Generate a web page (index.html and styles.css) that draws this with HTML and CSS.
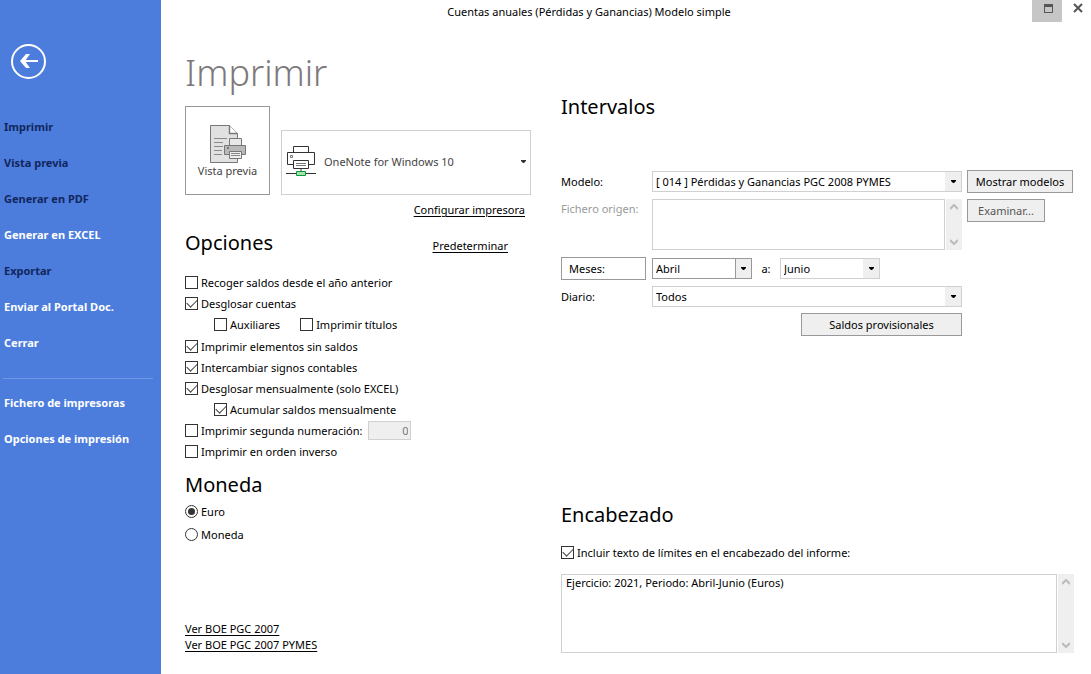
FILE: index.html
```html
<!DOCTYPE html>
<html lang="es">
<head>
<meta charset="utf-8">
<title>Cuentas anuales (Pérdidas y Ganancias) Modelo simple</title>
<link rel="stylesheet" href="styles.css">
</head>
<body>
<div class="app">
  <nav class="sidebar">
    <button class="back" aria-label="Volver">
      <svg width="35" height="35" viewBox="0 0 35 35" fill="none"><circle cx="17.500" cy="17.500" r="16.500" stroke="#fff" stroke-width="2"/><path d="M27 17H11" stroke="#fff" stroke-width="2"/><path d="M9 17l6-7h4l-5 7 5 7h-4z" fill="#fff"/></svg>
    </button>
    <ul class="menu">
      <li><button class="item dark">Imprimir</button></li>
      <li><button class="item dark">Vista previa</button></li>
      <li><button class="item dark">Generar en PDF</button></li>
      <li><button class="item">Generar en EXCEL</button></li>
      <li><button class="item dark">Exportar</button></li>
      <li><button class="item">Enviar al Portal Doc.</button></li>
      <li><button class="item">Cerrar</button></li>
    </ul>
    <hr class="divider">
    <ul class="menu">
      <li><button class="item">Fichero de impresoras</button></li>
      <li><button class="item">Opciones de impresión</button></li>
    </ul>
  </nav>

  <main class="main">
    <header class="titlebar">
      <span class="title">Cuentas anuales (Pérdidas y Ganancias) Modelo simple</span>
      <button class="win win-max" aria-label="Maximizar"><svg width="9" height="9" viewBox="0 0 9 9"><path d="M0 0h9v9H0zM1 3v5h7V3z" fill="#555" fill-rule="evenodd"/></svg></button>
      <button class="win win-close" aria-label="Cerrar"><svg width="10" height="10" viewBox="0 0 10 10"><path d="M1 1l8 8M9 1L1 9" stroke="#555" stroke-width="2"/></svg></button>
    </header>

    <div class="content">
      <section class="left">
        <h1 class="page-title">Imprimir</h1>
        <div class="printer-row">
          <button class="preview">
            <svg width="36" height="38" viewBox="0 0 36 38"><path d="M.5.5h19l8 8v29H.5z" fill="#e1e1e1" stroke="#777"/><path d="M19.500.5v8h8" fill="#fff" stroke="#777" stroke-width="1.400"/><path d="M4 13.500h13M4 17.500h9M4 21.500h9M4 25.500h8M4 29.500h8" stroke="#8a8a8a"/><path d="M19.500 13.500h12v7h-12z" fill="#e8e8e8" stroke="#777"/><path d="M14.500 20.500h21v9h-21z" fill="#b9b9b9" stroke="#777"/><path d="M17 22h2v2h-2z" fill="#777"/><path d="M19.500 26.500h12v7h-12z" fill="#eee" stroke="#777"/><path d="M21 28.500h9M21 30.500h9" stroke="#888"/></svg>
            <span>Vista previa</span>
          </button>
          <button class="printer">
            <svg width="30" height="31" viewBox="0 0 30 31" fill="#fff" stroke="#333"><path d="M7.500.5h15v6h-15zM1.500 6.500h27v12h-27z"/><path d="M4.500 9.500h2v2h-2z" stroke="#777"/><path d="M7.500 14.500h15v8h-15z"/><path d="M10 17.500h10M10 19.500h10" stroke="#777"/><path d="M15 23v3" stroke="#999" stroke-width="2"/><path d="M0 27.500h30"/><path d="M10.500 25.500h9v4h-9z" fill="#a8dfb4" stroke="#0a9a36"/></svg>
            <span class="printer-name">OneNote for Windows 10</span>
            <svg width="5" height="3" viewBox="0 0 5 3"><path d="M0 0h5v1L3 3H2L0 1z" fill="#333"/></svg>
          </button>
        </div>
        <div class="configure"><a class="link" href="#">Configurar impresora</a></div>
        <div class="options-head"><h2 class="heading">Opciones</h2><a class="link" href="#">Predeterminar</a></div>
        <div class="options">
          <label class="check"><input type="checkbox">Recoger saldos desde el año anterior</label>
          <label class="check"><input type="checkbox" checked>Desglosar cuentas</label>
          <div class="pair">
            <label class="check"><input type="checkbox">Auxiliares</label>
            <label class="check"><input type="checkbox">Imprimir títulos</label>
          </div>
          <label class="check"><input type="checkbox" checked>Imprimir elementos sin saldos</label>
          <label class="check"><input type="checkbox" checked>Intercambiar signos contables</label>
          <label class="check"><input type="checkbox" checked>Desglosar mensualmente (solo EXCEL)</label>
          <label class="check indent"><input type="checkbox" checked>Acumular saldos mensualmente</label>
          <div class="numbering">
            <label class="check"><input type="checkbox">Imprimir segunda numeración:</label>
            <input class="number" type="text" value="0" aria-label="Segunda numeración" disabled>
          </div>
          <label class="check"><input type="checkbox">Imprimir en orden inverso</label>
        </div>
        <h2 class="heading currency-head">Moneda</h2>
        <div class="currency">
          <label class="check"><input type="radio" name="moneda" checked>Euro</label>
          <label class="check"><input type="radio" name="moneda">Moneda</label>
        </div>
        <div class="boe">
          <a class="link" href="#">Ver BOE PGC 2007</a>
          <a class="link" href="#">Ver BOE PGC 2007 PYMES</a>
        </div>
      </section>

      <section class="right">
        <h2 class="heading">Intervalos</h2>
        <div class="form">
          <div class="row">
            <label for="modelo">Modelo:</label>
            <div class="combo"><select id="modelo"><option>[ 014 ] Pérdidas y Ganancias PGC 2008 PYMES</option></select><span class="arrow"><svg width="5" height="3" viewBox="0 0 5 3"><path d="M0 0h5v1L3 3H2L0 1z"/></svg></span></div>
            <button class="btn wide">Mostrar modelos</button>
          </div>
          <div class="row row-file">
            <label class="muted" for="fichero">Fichero origen:</label>
            <div class="scroll-box">
              <textarea id="fichero" class="area area-file"></textarea>
              <div class="scrollbar"><svg width="8" height="7" viewBox="0 0 8 7"><path d="M0 5l4-4 4 4" /></svg><svg width="8" height="7" viewBox="0 0 8 7"><path d="M0 2l4 4 4-4"/></svg></div>
            </div>
            <button class="btn browse">Examinar...</button>
          </div>
          <div class="row">
            <button class="btn months">Meses:</button>
            <div class="range">
              <div class="combo strong"><select aria-label="Mes inicial"><option>Abril</option></select><span class="arrow"><svg width="5" height="3" viewBox="0 0 5 3"><path d="M0 0h5v1L3 3H2L0 1z"/></svg></span></div>
              <label class="to" for="hasta">a:</label>
              <div class="combo"><select id="hasta"><option>Junio</option></select><span class="arrow"><svg width="5" height="3" viewBox="0 0 5 3"><path d="M0 0h5v1L3 3H2L0 1z"/></svg></span></div>
            </div>
          </div>
          <div class="row">
            <label for="diario">Diario:</label>
            <div class="combo"><select id="diario"><option>Todos</option></select><span class="arrow"><svg width="5" height="3" viewBox="0 0 5 3"><path d="M0 0h5v1L3 3H2L0 1z"/></svg></span></div>
          </div>
          <div class="row"><button class="btn balances">Saldos provisionales</button></div>
        </div>

        <h2 class="heading header-head">Encabezado</h2>
        <label class="check include"><input type="checkbox" checked>Incluir texto de límites en el encabezado del informe:</label>
        <div class="scroll-box">
          <textarea class="area area-header" aria-label="Encabezado del informe">Ejercicio: 2021, Periodo: Abril-Junio (Euros)</textarea>
          <div class="scrollbar"><svg width="8" height="7" viewBox="0 0 8 7"><path d="M0 5l4-4 4 4"/></svg><svg width="8" height="7" viewBox="0 0 8 7"><path d="M0 2l4 4 4-4"/></svg></div>
        </div>
      </section>
    </div>
  </main>
</div>
</body>
</html>
```

FILE: styles.css
```css
* { box-sizing: border-box; }
body, h1, h2, ul, hr { margin: 0; padding: 0; }
body, button, input, select, textarea {
  font-family: "Noto Sans", "Open Sans", sans-serif;
  font-size: 11px;
  line-height: 16px;
  color: #000;
}
body { background: #fff; }
button { padding: 0; border: 0; background: none; }
svg { display: block; flex: none; }

.app { display: flex; min-height: 100vh; }

.sidebar { flex: 0 0 161px; padding-top: 44px; background: #4c7ddd; }
.back { display: block; margin: 0 0 30px 11px; }
.menu { list-style: none; }
.item {
  display: block;
  width: 100%;
  height: 36px;
  padding-left: 4px;
  text-align: left;
  font-weight: 700;
  color: #fff;
}
.dark { color: #11265c; }
.divider { height: 1px; margin: 17px 8px 6px 3px; border: 0; background: #7097e4; }

.main { flex: 1; min-width: 0; }
.titlebar { display: flex; height: 22px; }
.title { flex: 1; padding-top: 4px; padding-right: 15px; text-align: center; }
.win { display: flex; justify-content: center; }
.win-max { width: 30px; padding: 4px 0 0 2px; background: #c6c6c6; }
.win-close { width: 29px; padding: 3px 0 0 2px; }

.content {
  display: grid;
  grid-template-columns: 346px minmax(0, 1fr);
  gap: 30px;
  padding: 0 17px 21px 24px;
}

.page-title {
  margin-top: 26px;
  font-size: 36px;
  line-height: 50px;
  font-weight: 300;
  color: #7d787a;
}
.heading { font-size: 20px; line-height: 30px; font-weight: 400; }

.printer-row { display: flex; align-items: flex-end; gap: 11px; margin-top: 8px; }
.preview {
  display: flex;
  flex-direction: column;
  align-items: center;
  width: 85px;
  height: 89px;
  padding-top: 18px;
  border: 1px solid #999;
  color: #444;
}
.printer {
  display: flex;
  flex: 1;
  align-items: center;
  gap: 8px;
  height: 65px;
  padding: 0 4px 2px;
  border: 1px solid #d0d0d0;
  color: #444;
}
.printer-name { flex: 1; text-align: left; }
.link { color: #000; text-decoration: underline; text-underline-offset: 2px; }
.configure { margin-top: 7px; padding-right: 6px; text-align: right; }
.options-head {
  display: flex;
  align-items: flex-end;
  justify-content: space-between;
  margin-top: 10px;
  padding-right: 23px;
}
.options-head .link { padding-bottom: 4px; }

.options { margin-top: 14px; }
.check { display: flex; align-items: center; gap: 3px; height: 21px; }
.check input {
  appearance: none;
  flex: none;
  width: 13px;
  height: 13px;
  margin: 0;
  border: 1px solid #333;
  background: #fff;
}
.check input[type="checkbox"]:checked::before {
  content: "";
  display: block;
  width: 9px;
  height: 5px;
  margin: 2px 0 0 1px;
  border: solid #444;
  border-width: 0 0 1px 1px;
  transform: translateY(-1px) rotate(-45deg);
}
.check input[type="radio"] { border-radius: 50%; }
.check input[type="radio"]:checked::before {
  content: "";
  display: block;
  width: 7px;
  height: 7px;
  margin: 2px;
  border-radius: 50%;
  background: #333;
}
.pair { display: flex; gap: 20px; margin: 0 0 1px 29px; }
.indent { margin-left: 29px; }
.numbering { display: flex; align-items: center; gap: 6px; height: 21px; }
.number {
  width: 43px;
  height: 19px;
  padding: 0 2px;
  border: 1px solid #d0d0d0;
  background: #efefef;
  color: #777;
  text-align: right;
}
.currency-head { margin-top: 8px; }
.currency .check { height: 23px; }
.boe { display: flex; flex-direction: column; align-items: flex-start; margin-top: 75px; }

.right { padding-top: 70px; }
.form { display: grid; gap: 5px; margin-top: 48px; }
.row {
  display: grid;
  grid-template-columns: 86px minmax(0, 1fr) 107px;
  align-items: center;
  column-gap: 5px;
  min-height: 23px;
}
.row-file { align-items: start; padding: 1px 0 2px; }
.row-file label { padding-top: 2px; }
.muted { color: #999; }
.combo { display: grid; height: 21px; border: 1px solid #d0d0d0; }
.combo select, .arrow { grid-area: 1 / 1; }
.combo select {
  appearance: none;
  min-width: 0;
  padding: 0 18px 0 3px;
  border: 0;
  border-radius: 0;
  background: #fff;
}
.arrow {
  display: flex;
  align-items: center;
  justify-content: center;
  justify-self: end;
  width: 16px;
  background: #efefef;
  pointer-events: none;
}
.strong { border-color: #999; }
.strong .arrow { border-left: 1px solid #999; }
.range { display: grid; grid-template-columns: 100px 28px 100px; align-items: center; }
.to { text-align: center; }
.btn { height: 23px; border: 1px solid #999; background: #efefef; }
.wide { width: 106px; }
.browse { width: 78px; color: #555; }
.months { width: 85px; padding-left: 7px; text-align: left; background: #fff; }
.balances { grid-column: 2; justify-self: end; width: 161px; }

.scroll-box { display: flex; gap: 1px; }
.area {
  flex: 1;
  min-width: 0;
  padding: 0 4px;
  border: 1px solid #d0d0d0;
  overflow: hidden;
  resize: none;
}
.area-file { height: 51px; }
.area-header { height: 79px; }
.scrollbar {
  display: flex;
  flex-direction: column;
  align-items: center;
  justify-content: space-between;
  width: 16px;
  padding: 5px 0;
  background: #efefef;
}
.scrollbar path { fill: none; stroke: #bbb; stroke-width: 2; }
.header-head { margin-top: 164px; }
.include { margin: 12px 0 11px; }
```
